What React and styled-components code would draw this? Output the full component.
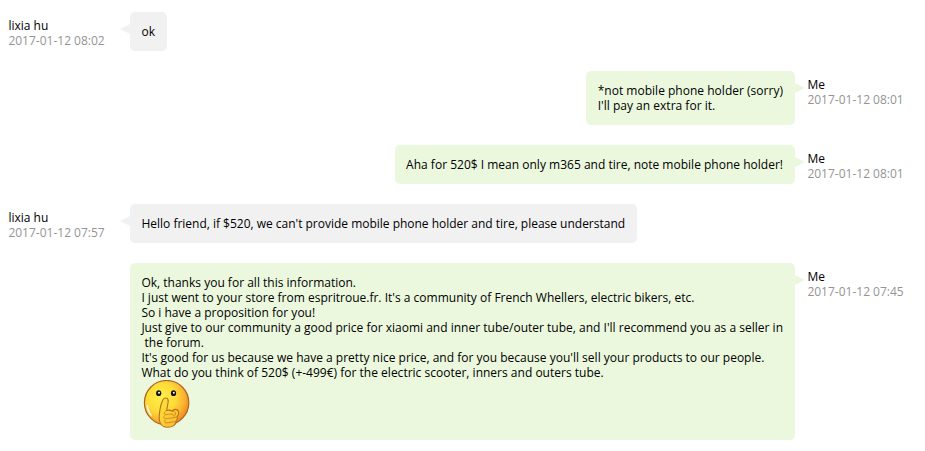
import React from 'react'
import styled, { createGlobalStyle } from 'styled-components'

const GlobalStyle = createGlobalStyle`
  body {
    margin: 0;
    background-color: #fff;
    color: #000;
    font-family: "Open Sans", sans-serif;
    font-size: 12px;
    line-height: 15px;
  }
`

const MessageList = styled.div`
  box-sizing: border-box;
  width: 925px;
  padding: 12px 8px 11px;
  display: flex;
  flex-direction: column;
  gap: 20px;
`

const MessageRow = styled.div`
  display: grid;
  grid-template-columns: 122px 665px 1fr;
  align-items: start;
`

const Sender = styled.div`
  grid-column: ${({ $mine }) => ($mine ? 3 : 1)};
  grid-row: 1;
  height: 36px;
  padding: 6px 0 0 ${({ $mine }) => ($mine ? '12.4px' : '0.4px')};
  box-sizing: border-box;
  white-space: nowrap;
`

const SenderName = styled.div`
  color: #000;
`

const SentAt = styled.div`
  color: #949494;
`

const Bubble = styled.div`
  grid-column: 2;
  grid-row: 1;
  justify-self: ${({ $mine }) => ($mine ? 'end' : 'start')};
  position: relative;
  padding: ${({ $mine }) => ($mine ? '12px 12px 12px 11.5px' : '12px 11.5px')};
  border-radius: 5px;
  background-color: ${({ $mine }) => ($mine ? '#ebf8de' : '#f1f1f1')};
  letter-spacing: ${({ $tracking }) => $tracking || 0}px;

  &::after {
    content: '';
    position: absolute;
    top: 12px;
    ${({ $mine }) => ($mine ? 'left: 100%' : 'right: 100%')};
    border: 5px solid transparent;
    ${({ $mine }) => ($mine
    ? 'border-left: 10px solid #ebf8de; border-right: 0;'
    : 'border-right: 10px solid #f1f1f1; border-left: 0;')}
  }
`

const Line = styled.div`
  white-space: pre;
`

const Emoji = styled.svg`
  display: block;
  width: 48px;
  height: 48px;
  margin-left: 0.5px;
`

const ShushEmoji = () => (
  <Emoji viewBox="0 0 48 48">
    <defs>
      <radialGradient id="face" cx="0.38" cy="0.38" r="0.66">
        <stop offset="0" stopColor="#fff04a" />
        <stop offset="0.5" stopColor="#fedb38" />
        <stop offset="0.8" stopColor="#fbb030" />
        <stop offset="1" stopColor="#ee8a1c" />
      </radialGradient>
      <linearGradient id="hand" x1="0" y1="0" x2="1" y2="1">
        <stop offset="0" stopColor="#ffe63c" />
        <stop offset="1" stopColor="#fbb62c" />
      </linearGradient>
    </defs>
    <circle cx="24.6" cy="22.7" r="22.2" fill="url(#face)" stroke="#a9651f" strokeWidth="1.2" />
    <path d="M4.5 26c.3 4 1.6 7 4 9.500 1 .8 1.700.2 1.200-.8-1.800-2.500-3-5.200-3.400-8.700-.3-1.600-1.800-1.400-1.800 0z" fill="#fff8cf" />
    <ellipse cx="16.7" cy="13.200" rx="2.600" ry="2.900" fill="#141210" />
    <ellipse cx="31.500" cy="13.200" rx="2.600" ry="2.900" fill="#141210" />
    <circle cx="17" cy="12.800" r="1" fill="#fff" />
    <circle cx="31.800" cy="12.800" r="1" fill="#fff" />
    <path
      d="M20.700 20.200C21.300 18.600 22.600 17.800 24 18C25.600 18.200 26.400 19.500 26.200 21.500C25.900 24.500 25 27.300 24.700 30.500C26.500 29.800 28.500 30.200 30.200 31.200C31.300 28.800 35.600 28.700 36.500 31.300C37.200 33.200 36.500 35 35.300 36.300C35.700 38.200 35.200 39.800 34.200 41C34.200 44.800 30.500 47.300 25.600 47.300C20.500 47.300 17.400 43.700 17.200 38.500C17 35.200 17.600 32 18.100 29C18.500 26 19.500 23 20.700 20.200Z"
      fill="url(#hand)"
      stroke="#b3701f"
      strokeWidth="1.100"
      strokeLinejoin="round"
    />
    <path
      d="M24.700 30.500C22.800 31.400 21.600 33 22.500 34.100C24.500 35.300 27.500 33.400 31 34.200M22.700 35.500C21.200 37 21.700 38.500 23.600 38.700C26 38.800 28 37.700 30.800 38M23.200 40C22 41.500 22.700 42.800 24.300 43L29.500 42.200M30.200 31.200C32.500 31 33.900 32.100 33.600 34C33.300 35.600 32.200 36.100 31.200 35.700M35.300 36.300C34 37.400 32.500 37.600 31.200 37.300M34.200 41C32.900 42.100 31.300 42.300 30 41.700"
      fill="none"
      stroke="#c98525"
      strokeWidth="0.900"
      strokeLinecap="round"
    />
  </Emoji>
)

const messages = [
  {
    name: 'lixia hu',
    date: '2017-01-12 08:02',
    lines: ['ok']
  },
  {
    mine: true,
    name: 'Me',
    date: '2017-01-12 08:01',
    tracking: 0.015,
    lines: ['*not mobile phone holder (sorry)', "I'll pay an extra for it."]
  },
  {
    mine: true,
    name: 'Me',
    date: '2017-01-12 08:01',
    tracking: 0.007,
    lines: ['Aha for 520$ I mean only m365 and tire, note mobile phone holder!']
  },
  {
    name: 'lixia hu',
    date: '2017-01-12 07:57',
    tracking: -0.012,
    lines: ["Hello friend, if $520, we can't provide mobile phone holder and tire, please understand"]
  },
  {
    mine: true,
    name: 'Me',
    date: '2017-01-12 07:45',
    tracking: 0.007,
    lines: [
      'Ok, thanks you for all this information.',
      "I just went to your store from espritroue.fr. It's a community of French Whellers, electric bikers, etc.",
      'So i have a proposition for you!',
      "Just give to our community a good price for xiaomi and inner tube/outer tube, and I'll recommend you as a seller in",
      ' the forum.',
      "It's good for us because we have a pretty nice price, and for you because you'll sell your products to our people.",
      'What do you think of 520$ (+-499€) for the electric scooter, inners and outers tube.'
    ],
    emoji: true
  }
]

const Message = ({ mine, name, date, lines, tracking, emoji }) => (
  <MessageRow>
    <Sender $mine={mine}>
      <SenderName>{name}</SenderName>
      <SentAt>{date}</SentAt>
    </Sender>
    <Bubble $mine={mine} $tracking={tracking}>
      {lines.map((line, i) => <Line key={i}>{line}</Line>)}
      {emoji && <ShushEmoji />}
    </Bubble>
  </MessageRow>
)

export default () => (
  <>
    <GlobalStyle />
    <MessageList>
      {messages.map((message, i) => <Message key={i} {...message} />)}
    </MessageList>
  </>
)
